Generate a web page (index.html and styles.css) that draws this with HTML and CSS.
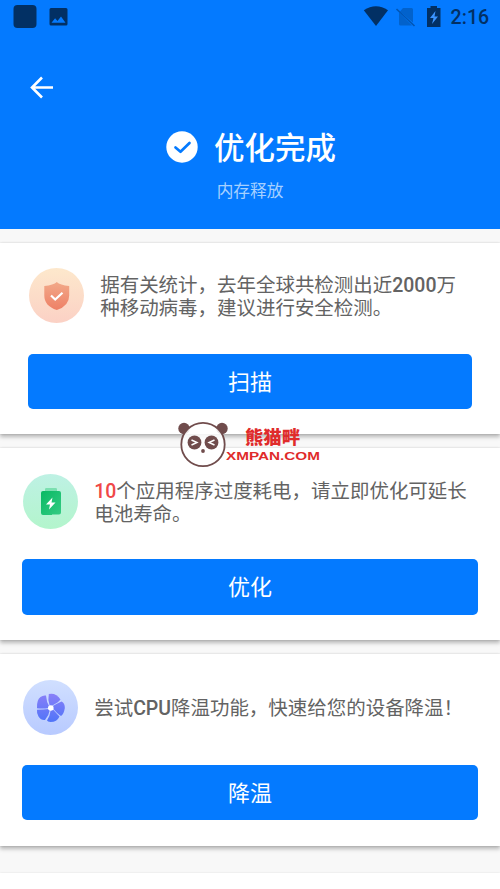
FILE: index.html
```html
<!DOCTYPE html>
<html lang="zh-CN">
<head>
<meta charset="utf-8">
<title>优化完成</title>
<link rel="stylesheet" href="styles.css">
</head>
<body>
<header class="hero">
  <div class="status">
    <svg class="status-left" width="60" height="26" viewBox="0 0 60 26">
      <rect x=".5" y="1" width="23" height="23" rx="4" fill="#023064"/>
      <path fill="#023064" fill-rule="evenodd" d="M38 4H53a1.500 1.500 0 0 1 1.500 1.500V20a1.500 1.500 0 0 1-1.500 1.500H38a1.500 1.500 0 0 1-1.500-1.500V5.500A1.500 1.500 0 0 1 38 4ZM38.500 18.700H52.500L48 12.500L44.500 17L42.100 14.200Z"/>
    </svg>
    <svg class="status-right" width="80" height="26" viewBox="0 0 80 26">
      <path d="M.8 6.200Q13 -1.800 25 6.200L13 22Z" fill="#023064"/>
      <path d="M37 7.500L40 4H48.500Q50 4 50 5.500V18.500ZM36 8.500V20Q36 21.500 37.500 21.500H49Z" fill="#0262cc"/>
      <path d="M33.500 5L51.500 22" stroke="#0256b4" stroke-width="1.700"/>
      <path d="M67.500 4V2H74V4H77.500V23H64V4Z" fill="#023064"/>
      <path d="M72.500 7L67 14H70.500L69 20L75 12.500H71.500Z" fill="#3b94ff"/>
    </svg>
    <span class="clock">2:16</span>
  </div>
  <svg class="back" width="24" height="24" viewBox="0 0 24 24" fill="none" stroke="#fff" stroke-width="2.600"><path d="M13 1.500L3 11.500L13 21.500M3 11.500H24"/></svg>
  <div class="headline">
    <svg width="32" height="32" viewBox="0 0 32 32"><circle cx="16" cy="16" r="15.700" fill="#fff"/><path d="M9.500 16.500L14.500 20.800L23.500 12" fill="none" stroke="#047aff" stroke-width="2.700" stroke-linecap="round" stroke-linejoin="round"/></svg>
    <h1>优化完成</h1>
  </div>
  <p class="subtitle">内存释放</p>
</header>
<main>
  <section class="card card-inset">
    <div class="info">
      <svg class="icon" viewBox="0 0 55 55">
        <defs><linearGradient id="peach" x2="0" y2="1"><stop stop-color="#fde8cc"/><stop offset="1" stop-color="#fbd1c5"/></linearGradient><linearGradient id="shield" x2="0" y2="1"><stop stop-color="#f2a989"/><stop offset="1" stop-color="#ee8066"/></linearGradient></defs>
        <circle cx="27.500" cy="27.500" r="27.500" fill="url(#peach)"/>
        <path d="M27.800 14Q31 17 40.200 18V27.500Q40.200 38 27.800 42Q15.300 38 15.300 27.500V18Q24.500 17 27.800 14Z" fill="url(#shield)"/>
        <path d="M22 27.500L26.200 31.500L33.500 24.800" fill="none" stroke="#fff" stroke-width="2.200"/>
      </svg>
      <p>据有关统计，去年全球共检测出近2000万<br>种移动病毒，建议进行安全检测。</p>
    </div>
    <button class="action">扫描</button>
  </section>
  <section class="card">
    <div class="info">
      <svg class="icon" viewBox="0 0 55 55">
        <defs><linearGradient id="mint" x2="0" y2="1"><stop stop-color="#bef1e4"/><stop offset="1" stop-color="#b3f5cc"/></linearGradient><linearGradient id="cell" x2="1" y2="1"><stop stop-color="#08b963"/><stop offset="1" stop-color="#35cb83"/></linearGradient></defs>
        <circle cx="27.500" cy="27.500" r="27.500" fill="url(#mint)"/>
        <rect x="22" y="14" width="12" height="5" rx="1.200" fill="#7bdfb0"/>
        <path d="M20 17H36Q38 17 38 19V38.500Q38 40.500 36 40.500H29V41H20Q18 41 18 39V30V28V19Q18 17 20 17Z" fill="url(#cell)"/>
        <path d="M29.500 23.500L23 30.500H27L26 35.500L32.500 28.500H28.500Z" fill="#fff"/>
      </svg>
      <p><span class="count">10</span>个应用程序过度耗电，请立即优化可延长<br>电池寿命。</p>
    </div>
    <button class="action">优化</button>
  </section>
  <section class="card">
    <div class="info">
      <svg class="icon" viewBox="0 0 55 55">
        <defs><linearGradient id="sky" x2="0" y2="1"><stop stop-color="#d0dfff"/><stop offset="1" stop-color="#b8caff"/></linearGradient><linearGradient id="fan" gradientUnits="userSpaceOnUse" x1="28" y1="13" x2="28" y2="42"><stop stop-color="#8b80f8"/><stop offset="1" stop-color="#5074f8"/></linearGradient></defs>
        <circle cx="27.500" cy="27.500" r="27.500" fill="url(#sky)"/>
        <g fill="url(#fan)">
          <path d="M26.800 26Q24.500 20 25.800 14Q33 12.500 37.500 19.500Q36 22 28.500 26Z"/>
          <path d="M29 26.500Q33 24 38.500 21.500Q42 23 41.800 28Q41 34 38 36Q34.500 34 30 28.500Z"/>
          <path d="M30 29.500Q34 34 36.500 36.500Q34 42 27.500 42Q24.500 41.500 24 40.500Q27 36 27.800 30Z"/>
          <path d="M26.800 30Q26 35.500 22 40Q18 40.500 15.500 36.500Q13.500 33 14 29.800Q20 29.500 26 29Z"/>
          <path d="M25.500 28Q20 29 14 28.200Q13.500 20 17.500 17Q20 15 23 15.500Q23.500 22 26.200 26.500Z"/>
        </g>
        <circle cx="27.800" cy="28" r="2.800" fill="#fff"/>
      </svg>
      <p>尝试CPU降温功能，快速给您的设备降温！</p>
    </div>
    <button class="action">降温</button>
  </section>
  <section class="card card-next"></section>
</main>
<svg class="watermark" width="150" height="50" viewBox="0 0 150 50">
  <g fill="#704c4c">
    <circle cx="8" cy="8.500" r="5.700"/><circle cx="46" cy="8.500" r="5.700"/>
    <circle cx="27" cy="24.500" r="21.700" fill="#fff" fill-opacity=".85" stroke="#704c4c" stroke-width="1.800"/>
    <circle cx="18.500" cy="22.500" r="6.900"/><circle cx="35.500" cy="22.500" r="6.900"/><circle cx="27" cy="31" r="1.900"/>
  </g>
  <path d="M15.500 20L21 22.500L15.500 25M38.500 20L33 22.500L38.500 25" fill="none" stroke="#fff" stroke-width="1.400"/>
  <text class="brand" x="69" y="23.500" textLength="55" lengthAdjust="spacingAndGlyphs">熊猫畔</text>
  <text class="domain" x="50" y="39.500" textLength="94" lengthAdjust="spacingAndGlyphs">XMPAN.COM</text>
</svg>
</body>
</html>
```
FILE: styles.css
```css
* { box-sizing: border-box; }
body {
  position: relative;
  margin: 0;
  height: 889px;
  overflow: hidden;
  background: #f8f8f8;
  font-family: Roboto, "Noto Sans CJK SC", sans-serif;
}
h1, p { margin: 0; }
svg { display: block; flex: none; }
.hero { height: 229px; background: #047aff; color: #fff; }
.status { display: flex; align-items: center; height: 34px; padding: 0 11px 0 13px; }
.status-right { margin-left: auto; }
.clock { width: 38.500px; margin-left: 8px; font-size: 19.500px; font-weight: 500; letter-spacing: .1px; color: #023064; }
.back { margin: 42px 0 0 29px; }
.headline { display: flex; align-items: center; gap: 16px; height: 44px; margin-top: 25px; padding-left: 166px; }
h1 { padding-top: 3px; font-size: 30.500px; font-weight: 500; line-height: 44px; white-space: nowrap; }
.headline svg { margin-top: -1px; }
.subtitle { margin-top: 11px; font-size: 16.700px; line-height: 24px; text-align: center; color: #a6d0ff; }
main { display: flex; flex-direction: column; gap: 14px; padding-top: 13.500px; }
.card {
  height: 191.700px;
  padding: 26px 22px 0;
  background: #fff;
  box-shadow: 0 3px 4px rgba(0, 0, 0, .26), 0 0 2px rgba(0, 0, 0, .16);
}
.card-inset { padding: 25.500px 28px 0; }
.card-inset .info { padding-left: .500px; }
.card-next { height: 40px; margin-top: 13px; box-shadow: 0 0 2px rgba(0, 0, 0, .1); }
.info { display: flex; align-items: center; gap: 16.700px; height: 55px; padding-left: .500px; }
.icon { width: 55px; height: 55px; }
.info p { padding-top: 4px; font-size: 19.480px; font-weight: 400; line-height: 22.700px; color: #636363; white-space: nowrap; font-family: "Roboto Medium", Roboto, "Noto Sans CJK SC", sans-serif; }
.count { color: #f04848; }
.action {
  display: block;
  width: 100%;
  height: 55.500px;
  margin: 30px 0 0;
  padding: 2px 0 0;
  border: 0;
  border-radius: 5px;
  background: #047aff;
  color: #fff;
  font: 400 22px/53.500px Roboto, "Noto Sans CJK SC", sans-serif;
}
.card-inset .action { margin-top: 30.500px; }
.watermark { position: absolute; left: 176px; top: 420px; }
.brand { fill: #e02b2b; font: 900 18px "Noto Sans CJK SC", sans-serif; }
.domain { fill: #e02b2b; font: 700 11px "Liberation Sans", sans-serif; }
```
